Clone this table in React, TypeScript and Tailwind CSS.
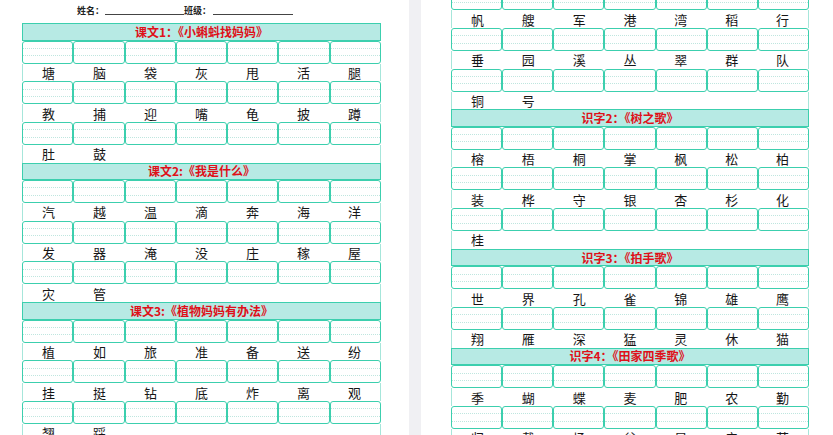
import React from "react";

type Section = { title?: string; chars: string };

const leftSections: Section[] = [
  { title: "课文1：《小蝌蚪找妈妈》", chars: "塘脑袋灰甩活腿教捕迎嘴龟披蹲肚鼓" },
  { title: "课文2:《我是什么》", chars: "汽越温滴奔海洋发器淹没庄稼屋灾管" },
  { title: "课文3:《植物妈妈有办法》", chars: "植如旅准备送纷挂挺钻底炸离观翘踩" },
];

const rightSections: Section[] = [
  { chars: "帆艘军港湾稻行垂园溪丛翠群队铜号" },
  { title: "识字2：《树之歌》", chars: "榕梧桐掌枫松柏装桦守银杏杉化桂" },
  { title: "识字3：《拍手歌》", chars: "世界孔雀锦雄鹰翔雁深猛灵休猫" },
  { title: "识字4：《田家四季歌》", chars: "季蝴蝶麦肥农勤归戴场谷星辛苦" },
];

const font = { fontFamily: '"Noto Sans CJK SC", "Noto Sans", sans-serif' };

function BoxRow() {
  return (
    <div className="grid grid-cols-7 h-[23px] shrink-0">
      {Array.from({ length: 7 }).map((_, i) => (
        <div
          key={i}
          className="border-[1.5px] border-[#3ccfae] rounded-[3px] flex flex-col bg-white"
        >
          <div className="flex-1" />
          <div className="flex-1 border-y border-dotted border-[#bfe6df]" />
          <div className="flex-1" />
        </div>
      ))}
    </div>
  );
}

function CharRow({ chars }: { chars: string[] }) {
  const cells = [...chars];
  while (cells.length < 7) cells.push("");
  return (
    <div className="grid grid-cols-7 h-[17.7px] shrink-0 border-x border-[#a6e6da] bg-white">
      {cells.map((c, i) => (
        <div
          key={i}
          className="flex items-center justify-center text-[13px] leading-none text-[#161616]"
        >
          {c}
        </div>
      ))}
    </div>
  );
}

function Title({ text }: { text: string }) {
  return (
    <div className="h-[17.5px] shrink-0 border border-[#3ccfae] bg-[#b7eae4] flex items-center justify-center text-[12px] font-bold leading-none text-[#df1019]">
      {text}
    </div>
  );
}

function SectionBlock({ s }: { s: Section }) {
  const arr = Array.from(s.chars);
  const rows: string[][] = [];
  for (let i = 0; i < arr.length; i += 7) rows.push(arr.slice(i, i + 7));
  return (
    <div className="flex flex-col shrink-0">
      {s.title && <Title text={s.title} />}
      {rows.map((r, i) => (
        <div key={i} className="flex flex-col shrink-0">
          <BoxRow />
          <CharRow chars={r} />
        </div>
      ))}
    </div>
  );
}

export default function App() {
  return (
    <div className="w-[833px] h-[435px] overflow-hidden flex bg-white" style={font}>
      <div className="w-[409px] h-full bg-white pl-[22px] overflow-hidden shrink-0">
        <div className="h-[23px] flex items-start pt-[6px] text-[9px] font-bold text-[#222] leading-none">
          <div className="ml-[55px]">姓名：</div>
          <div className="w-[79px] border-b border-[#444] ml-[1px] h-[9px]" />
          <div>班级：</div>
          <div className="w-[80px] border-b border-[#444] ml-[2px] h-[9px]" />
        </div>
        <div className="w-[359px] flex flex-col">
          {leftSections.map((s, i) => (
            <SectionBlock key={i} s={s} />
          ))}
        </div>
      </div>
      <div className="w-[12px] h-full bg-[#f0f0f3] shrink-0" />
      <div className="flex-1 h-full bg-white pl-[30px] overflow-hidden">
        <div className="w-[358px] flex flex-col mt-[-12.8px]">
          {rightSections.map((s, i) => (
            <SectionBlock key={i} s={s} />
          ))}
        </div>
      </div>
    </div>
  );
}
